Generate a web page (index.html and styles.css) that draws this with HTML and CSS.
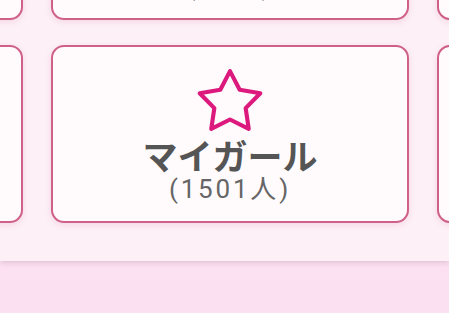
FILE: index.html
```html
<!DOCTYPE html>
<html lang="ja">
<head>
<meta charset="utf-8">
<link rel="stylesheet" href="styles.css">
</head>
<body>
<div class="panel">
  <div class="grid">
    <div class="card"></div>
    <div class="card">
      <svg class="star" viewBox="0 0 70 64" width="72" height="66"><polygon points="35,3 44.4,21.06 64.48,24.42 50.22,38.94 53.22,59.08 35,50 16.78,59.08 19.78,38.94 5.52,24.42 25.6,21.06"/></svg>
      <div class="name">お気に入り</div>
      <div class="count">(37人)</div>
    </div>
    <div class="card"></div>
    <div class="card"></div>
    <div class="card">
      <svg class="star" viewBox="0 0 70 64" width="72" height="66"><polygon points="35,3 44.4,21.06 64.48,24.42 50.22,38.94 53.22,59.08 35,50 16.78,59.08 19.78,38.94 5.52,24.42 25.6,21.06"/></svg>
      <div class="name">マイガール</div>
      <div class="count">(1501人)</div>
    </div>
    <div class="card"></div>
  </div>
</div>
</body>
</html>
```
FILE: styles.css
```css
html, body {
  margin: 0;
  padding: 0;
}
body {
  width: 449px;
  height: 313px;
  overflow: hidden;
  background: linear-gradient(180deg, #fce6f3 0%, #fbe0f1 100%);
  font-family: "Noto Sans CJK JP", "Noto Sans", sans-serif;
}
.panel {
  height: 261px;
  box-sizing: border-box;
  background: #fdf0f7;
  box-shadow: 0 2px 5px rgba(120, 60, 90, 0.18);
  overflow: hidden;
  display: flex;
  flex-direction: column;
  justify-content: flex-end;
  padding-bottom: 38px;
  position: relative;
}
.grid {
  display: grid;
  grid-template-columns: repeat(3, 358px);
  grid-template-rows: repeat(2, 178px);
  column-gap: 28px;
  row-gap: 25px;
  margin-left: -335px;
  flex: none;
}
.card {
  box-sizing: border-box;
  border: 2px solid #cf6188;
  border-radius: 13px;
  background: #fffbfd;
  box-shadow: 0 2px 6px rgba(210, 98, 138, 0.18);
  display: flex;
  flex-direction: column;
  align-items: center;
  padding-top: 21px;
}
.star {
  display: block;
  fill: none;
  stroke: #dc1a7e;
  stroke-width: 4;
  stroke-linejoin: round;
}
.name {
  margin-top: 1px;
  font-size: 35px;
  line-height: 40px;
  font-weight: 700;
  color: #555;
}
.count {
  font-family: Roboto, "Noto Sans CJK JP", sans-serif;
  font-size: 26px;
  line-height: 29px;
  color: #666;
  letter-spacing: 2.8px;
}
```
